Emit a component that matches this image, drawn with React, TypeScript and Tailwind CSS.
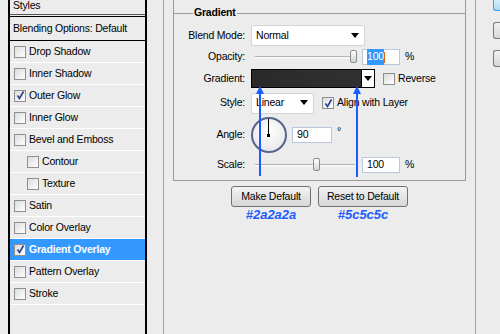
import React from "react";

const font = { fontFamily: '"Liberation Sans", Arial, sans-serif' };

function Check({ on = false }: { on?: boolean }) {
  return (
    <span className="flex h-[12px] w-[12px] shrink-0 items-center justify-center border border-[#8f8f8f] bg-gradient-to-br from-[#dcdcdc] to-[#ffffff]">
      {on && (
        <svg width="9" height="9" viewBox="0 0 9 9">
          <path d="M1.5 4.5 L3.5 7.5 L7.5 0.5" fill="none" stroke="#2b3f8c" strokeWidth="1.6" />
        </svg>
      )}
    </span>
  );
}

const styleRows: { label: string; on?: boolean; indent?: boolean; active?: boolean }[] = [
  { label: "Drop Shadow" },
  { label: "Inner Shadow" },
  { label: "Outer Glow", on: true },
  { label: "Inner Glow" },
  { label: "Bevel and Emboss" },
  { label: "Contour", indent: true },
  { label: "Texture", indent: true },
  { label: "Satin" },
  { label: "Color Overlay" },
  { label: "Gradient Overlay", on: true, active: true },
  { label: "Pattern Overlay" },
  { label: "Stroke" },
];

function Arrow() {
  return (
    <svg width="8" height="6" viewBox="0 0 8 6">
      <path d="M0 0 H8 L4 5 Z" fill="#000" />
    </svg>
  );
}

function Slider({ pos }: { pos: number }) {
  return (
    <div className="relative h-[16px] w-[104px]">
      <div className="absolute left-[4px] right-0 top-[7px] h-[3px] border-t border-[#b5b5b5] bg-[#f7f7f7]" />
      <div
        className="absolute top-[1px] h-[13px] w-[7px] rounded-[2px] border border-[#8c8c8c] bg-gradient-to-b from-[#ffffff] to-[#d4d4d4]"
        style={{ left: pos }}
      />
    </div>
  );
}

function Field({ children, w }: { children: React.ReactNode; w: string }) {
  return (
    <div className={`flex h-[16px] items-center border border-[#b9c6dc] bg-white pl-[4px] text-[10.5px] ${w}`}>
      {children}
    </div>
  );
}

function Label({ children }: { children: React.ReactNode }) {
  return <div className="w-[72px] shrink-0 pr-[1px] text-right text-[10.5px] text-black">{children}</div>;
}

export default function App() {
  return (
    <div
      className="relative flex h-[334px] w-[500px] overflow-hidden bg-[#ececec] tracking-[-0.2px] text-black"
      style={font}
    >
      {/* styles list */}
      <div className="h-full w-[164px] shrink-0 border-r border-[#a3a3a3] pl-[8px]">
        <div className="h-full w-[139px] border-x-2 border-black">
          <div className="h-[15px] border-b border-[#555] pl-[3px] text-[10.5px] leading-[11px]">Styles</div>
          <div className="h-[1px]" />
          <div className="flex h-[25px] items-center border-y border-black pl-[3px] text-[10.5px]">
            Blending Options: Default
          </div>
          {styleRows.map((r) => (
            <div
              key={r.label}
              className={`flex h-[22px] items-center gap-[3px] border-b border-white text-[10.5px] ${
                r.indent ? "pl-[17px]" : "pl-[4px]"
              } ${r.active ? "bg-[#3399ff] font-bold text-white" : ""}`}
            >
              <Check on={r.on} />
              <span>{r.label}</span>
            </div>
          ))}
        </div>
      </div>

      {/* settings */}
      <div className="flex h-full w-[312px] shrink-0 flex-col items-start border-r border-[#a3a3a3] pl-[9px]">
        <div className="h-[181px] w-[293px] border-x border-b border-[#9a9a9a] pt-[7px]">
          <div className="flex h-[12px] items-center">
            <div className="h-px w-[19px] bg-[#9a9a9a]" />
            <span className="px-[1px] text-[10.5px] font-bold">Gradient</span>
            <div className="h-px flex-1 bg-[#9a9a9a]" />
          </div>

          <div className="mt-[6px] flex h-[21px] items-center gap-[5px]">
            <Label>Blend Mode:</Label>
            <div className="flex h-[21px] w-[114px] items-center justify-between rounded-[2px] border border-[#d4d4d4] bg-white pl-[4px] pr-[5px] text-[10.5px]">
              <span>Normal</span>
              <Arrow />
            </div>
          </div>

          <div className="mt-[3px] flex h-[16px] items-center gap-[5px]">
            <Label>Opacity:</Label>
            <Slider pos={99} />
            <div className="ml-[2px]">
              <Field w="w-[38px]">
                <span className="bg-[#3399ff] text-white">100</span>
                <span className="h-[11px] w-px bg-[#e06010]" />
              </Field>
            </div>
            <span className="text-[10.5px]">%</span>
          </div>

          <div className="mt-[4px] flex h-[19px] items-center gap-[5px]">
            <Label>Gradient:</Label>
            <div className="flex h-[19px] w-[124px] border border-black">
              <div className="flex-1 border-r border-black bg-gradient-to-r from-[#2a2a2a] to-[#303030]" />
              <div className="flex w-[12px] items-center justify-center bg-white">
                <Arrow />
              </div>
            </div>
            <div className="ml-[3px] flex items-center gap-[3px] text-[10.5px]">
              <Check />
              <span>Reverse</span>
            </div>
          </div>

          <div className="mt-[4px] flex h-[22px] items-center gap-[5px]">
            <Label>Style:</Label>
            <div className="flex h-[21px] w-[63px] items-center justify-between rounded-[2px] border border-[#d4d4d4] bg-white pl-[4px] pr-[5px] text-[10.5px]">
              <span>Linear</span>
              <Arrow />
            </div>
            <div className="ml-[3px] flex items-center gap-[3px] text-[10.5px]">
              <Check on />
              <span>Align with Layer</span>
            </div>
          </div>

          <div className="mt-[3px] flex h-[36px] items-center gap-[5px]">
            <Label>Angle:</Label>
            <div className="relative h-[36px] w-[36px] rounded-full border-2 border-[#56648a] bg-[radial-gradient(circle_at_50%_40%,#ffffff,#e2e2e2)]">
              <div className="absolute left-[15px] top-[0px] h-[16px] w-px bg-black" />
              <div className="absolute left-[14px] top-[15px] h-[3px] w-[3px] bg-black" />
            </div>
            <div className="ml-[0px]">
              <Field w="w-[40px]">90</Field>
            </div>
            <span className="-mt-[6px] text-[10.5px]">°</span>
          </div>

          <div className="mt-[3px] flex h-[17px] items-center gap-[5px]">
            <Label>Scale:</Label>
            <Slider pos={62} />
            <div className="ml-[2px]">
              <Field w="w-[38px]">100</Field>
            </div>
            <span className="text-[10.5px]">%</span>
          </div>
        </div>

        <div className="mt-[5px] flex w-[293px] justify-center gap-[7px]">
          <div className="flex flex-col items-center">
            <button className="h-[21px] w-[80px] rounded-[3px] border border-[#707070] bg-gradient-to-b from-[#f3f3f3] to-[#d6d6d6] text-[10.5px]">
              Make Default
            </button>
            <span className="text-[13px] font-bold italic leading-[16px] tracking-normal text-[#1f5cff]">#2a2a2a</span>
          </div>
          <div className="flex flex-col items-center">
            <button className="h-[21px] w-[90px] rounded-[3px] border border-[#707070] bg-gradient-to-b from-[#f3f3f3] to-[#d6d6d6] text-[10.5px]">
              Reset to Default
            </button>
            <span className="text-[13px] font-bold italic leading-[16px] tracking-normal text-[#1f5cff]">#5c5c5c</span>
          </div>
        </div>
      </div>

      {/* dialog buttons, cut off */}
      <div className="flex flex-col pl-[17px]">
        <div className="h-[11px] w-[12px] rounded-bl-[3px] border-b border-l border-[#3aa0e8] bg-gradient-to-b from-[#d6eefc] to-[#a9d8f5]" />
        <div className="mt-[11px] h-[17px] w-[12px] rounded-l-[3px] border-y border-l border-[#7a7a7a] bg-gradient-to-b from-[#f3f3f3] to-[#d6d6d6]" />
        <div className="mt-[11px] h-[17px] w-[12px] rounded-l-[3px] border-y border-l border-[#7a7a7a] bg-gradient-to-b from-[#f3f3f3] to-[#d6d6d6]" />
      </div>

      {/* annotation arrows */}
      <svg className="pointer-events-none absolute left-0 top-0" width="500" height="334">
        <g fill="#1a5cff" stroke="#1a5cff">
          <line x1="260" y1="176" x2="260" y2="92" strokeWidth="2" />
          <path d="M260 86 L256 94 L264 94 Z" strokeWidth="0" />
          <line x1="357" y1="177" x2="357" y2="92" strokeWidth="2" />
          <path d="M357 86 L353 94 L361 94 Z" strokeWidth="0" />
        </g>
      </svg>
    </div>
  );
}
